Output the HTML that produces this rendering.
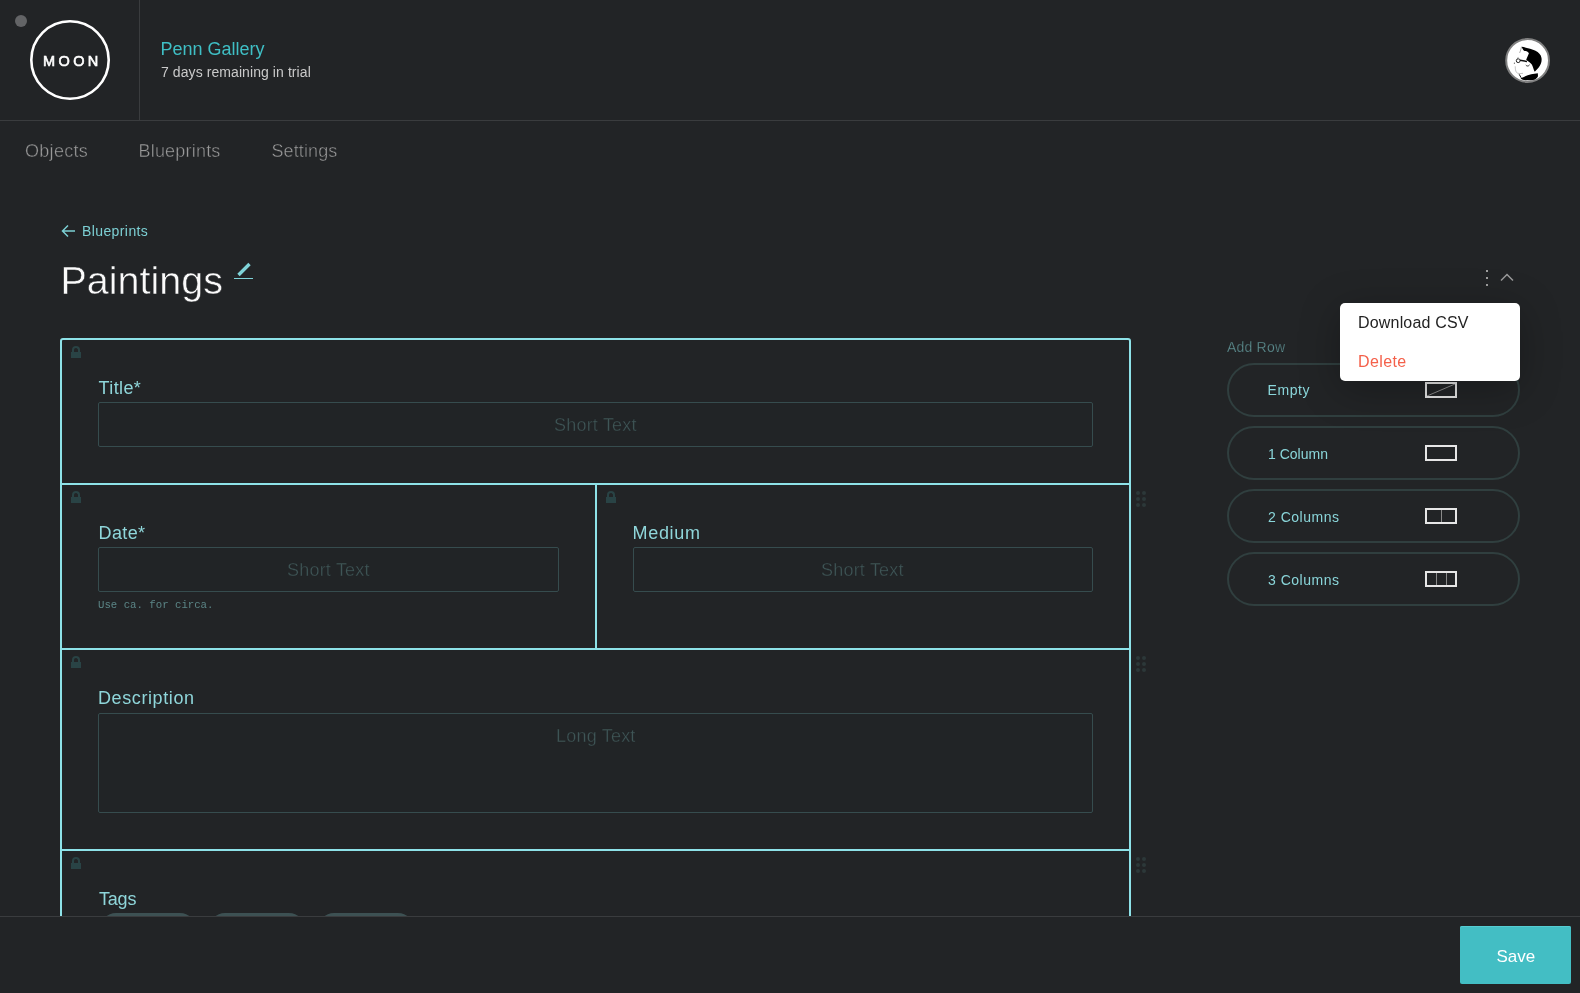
<!DOCTYPE html>
<html>
<head>
<meta charset="utf-8">
<style>
html,body{margin:0;padding:0;}
body{width:1580px;height:993px;overflow:hidden;background:#222426;font-family:"Liberation Sans",sans-serif;position:relative;-webkit-font-smoothing:antialiased;}
.a{position:absolute;line-height:1;white-space:pre;}
.hl{position:absolute;height:1px;background:#3a3c3e;}
.vl{position:absolute;width:1px;background:#3a3c3e;}
.cb{position:absolute;background:#8ee2e8;}
.lock{position:absolute;width:10px;height:13px;}
.lock:before{content:"";position:absolute;left:1px;top:0;width:4px;height:6px;border:2px solid #294345;border-bottom:none;border-radius:4px 4px 0 0;}
.lock:after{content:"";position:absolute;left:0;top:6px;width:10px;height:6px;background:#294345;}
.lbl{font-size:18px;color:#8fd6da;}
.inp{position:absolute;border:1px solid #364c4e;border-radius:2px;background:#212426;box-sizing:border-box;}
.ph{font-size:18px;color:#3f5657;letter-spacing:0.2px;-webkit-text-stroke:0.35px #212426;}
.drag{position:absolute;width:10px;height:16px;}
.drag i{position:absolute;width:4px;height:4px;border-radius:50%;background:#2c3839;}
.pill{position:absolute;left:1227px;width:293px;height:54px;box-sizing:border-box;border:2px solid #303f3f;border-radius:27px;}
.pt{font-size:14px;color:#8ad6da;}
.ico{position:absolute;left:1425px;width:32px;height:16px;box-sizing:border-box;border:2px solid #e6e6e6;}
.ico i{position:absolute;top:0;width:1px;height:12px;background:#8a8a8a;}
.tag{position:absolute;top:913px;width:96px;height:32px;border-radius:16px;background:#3d5153;}
</style>
</head>
<body>
<div id="w" style="position:absolute;left:0;top:0;width:1580px;height:993px;will-change:transform;">
<!-- header -->
<div class="a" style="left:15px;top:15px;width:12px;height:12px;border-radius:50%;background:#636466;"></div>
<svg class="a" style="left:30px;top:20px;" width="80" height="80" viewBox="0 0 80 80"><circle cx="40" cy="40" r="38.7" fill="none" stroke="#fff" stroke-width="2.6"/></svg>
<div class="a" style="left:43px;top:54px;font-size:14.5px;font-weight:400;color:#fff;letter-spacing:3.4px;-webkit-text-stroke:0.6px #fff;">MOON</div>
<div class="vl" style="left:139px;top:0;height:120px;"></div>
<div class="hl" style="left:0;top:120px;width:1580px;"></div>
<div class="a" style="left:160.5px;top:40px;font-size:18px;color:#3fbfc5;">Penn Gallery</div>
<div class="a" style="left:161px;top:65px;font-size:14px;color:#cacaca;letter-spacing:0.08px;">7 days remaining in trial</div>
<!-- avatar -->
<svg class="a" style="left:1505px;top:38px;" width="45" height="45" viewBox="0 0 45 45">
  <circle cx="22.6" cy="22.5" r="21.4" fill="#fff" stroke="#808080" stroke-width="2"/>
  <path d="M16.6 8.8 C20 9.3 27 11 30.5 12.8 C33.5 14.5 36 16.5 36.5 20 C37 23.5 36 26.5 33.5 29.8 L30 33.5 L29.5 33.5 C28.5 31 27.8 28.5 26.8 26.5 C25.5 24.8 23 23.3 21.2 21.8 C21.8 20 22.8 18 23.9 15.2 C23 13.5 21.5 13 19.5 13 C18.5 12.5 17.8 11.5 16.6 8.8 Z" fill="#000"/>
  <path d="M15.6 40.3 C19 38.8 23 37 26.2 36.3 L32.8 35.2 L33 38.3 C32 40 31 41 30 41.4 C27 42.2 23 42.5 20.5 42.3 C18.5 42 17 41.8 15.6 40.3 Z" fill="#000"/>
  <circle cx="13.2" cy="22.7" r="1.9" fill="none" stroke="#222" stroke-width="1"/>
  <path d="M15 22.3 L22 23.4" stroke="#111" stroke-width="1.5"/>
  <path d="M12.3 20.3 L13.3 19.6" stroke="#333" stroke-width="0.8"/>
  <path d="M20.8 27 C21.8 28.4 23.5 28.4 24.6 26.8" fill="none" stroke="#222" stroke-width="0.9"/>
  <path d="M14.2 36.3 L16.2 39.8" stroke="#111" stroke-width="1"/>
  <path d="M16.6 8.8 C16 11 15.5 13 14.6 15" fill="none" stroke="#777" stroke-width="0.6"/>
  <path d="M10.2 28.3 C10.3 31 10.6 33 11.4 34.3 C12.5 35.6 15 35.8 18 35.3" fill="none" stroke="#aaa" stroke-width="0.7"/>
  <circle cx="9.4" cy="25.2" r="0.6" fill="#555"/>
</svg>

<!-- nav -->
<div class="a" style="left:25px;top:142px;font-size:18px;color:#9a9a9a;-webkit-text-stroke:0.4px #222426;letter-spacing:0.3px;">Objects</div>
<div class="a" style="left:138.5px;top:142px;font-size:18px;color:#9a9a9a;-webkit-text-stroke:0.4px #222426;letter-spacing:0.2px;">Blueprints</div>
<div class="a" style="left:271.5px;top:142px;font-size:18px;color:#9a9a9a;-webkit-text-stroke:0.4px #222426;letter-spacing:0.1px;">Settings</div>

<!-- breadcrumb & title -->
<svg class="a" style="left:61px;top:224px;" width="15" height="14" viewBox="0 0 15 14">
  <path d="M7 1.5 L1.5 7 L7 12.5 M1.5 7 L14 7" fill="none" stroke="#7ccfd3" stroke-width="1.5"/>
</svg>
<div class="a" style="left:82px;top:224px;font-size:14px;color:#7ccfd3;letter-spacing:0.4px;">Blueprints</div>
<div class="a" style="left:60.5px;top:260.8px;font-size:39.5px;color:#fafafa;-webkit-text-stroke:0.5px #222426;">Paintings</div>
<svg class="a" style="left:233px;top:262px;" width="22" height="18" viewBox="0 0 22 18">
  <path d="M5.5 13 L16.5 2" stroke="#7fd3d8" stroke-width="3.4"/>
  <path d="M1 16.5 L20 16.5" stroke="#7fd3d8" stroke-width="1"/>
</svg>

<!-- kebab / chevron -->
<div class="a" style="left:1486px;top:270px;width:2px;height:2px;background:#9e9e9e;"></div>
<div class="a" style="left:1486px;top:277px;width:2px;height:2px;background:#9e9e9e;"></div>
<div class="a" style="left:1486px;top:284px;width:2px;height:2px;background:#9e9e9e;"></div>
<svg class="a" style="left:1499px;top:272px;" width="16" height="11" viewBox="0 0 16 11">
  <path d="M2 8.5 L8 2.5 L14 8.5" fill="none" stroke="#9a9a9a" stroke-width="1.5"/>
</svg>

<!-- canvas -->
<div class="a" style="left:60px;top:338px;width:1071px;height:700px;box-sizing:border-box;border:2px solid #8ee2e8;border-radius:3px;"></div>
<div class="cb" style="left:60px;top:483px;width:1071px;height:2px;"></div>
<div class="cb" style="left:60px;top:648px;width:1071px;height:2px;"></div>
<div class="cb" style="left:60px;top:849px;width:1071px;height:2px;"></div>
<div class="cb" style="left:595px;top:483px;width:2px;height:167px;"></div>

<!-- row 1 -->
<div class="lock" style="left:71px;top:346px;"></div>
<div class="a lbl" style="left:98.5px;top:379px;letter-spacing:0.4px;">Title*</div>
<div class="inp" style="left:98px;top:402px;width:995px;height:45px;"></div>
<div class="a ph" style="left:554px;top:416px;">Short Text</div>

<!-- row 2 -->
<div class="lock" style="left:71px;top:491px;"></div>
<div class="lock" style="left:606px;top:491px;"></div>
<div class="a lbl" style="left:98.5px;top:524px;letter-spacing:0.4px;">Date*</div>
<div class="inp" style="left:98px;top:547px;width:461px;height:45px;"></div>
<div class="a ph" style="left:287px;top:561px;">Short Text</div>
<div class="a" style="left:98px;top:600px;font-family:'Liberation Mono',monospace;font-size:10.7px;color:#5b8586;">Use ca. for circa.</div>
<div class="a lbl" style="left:632.5px;top:524px;letter-spacing:0.7px;">Medium</div>
<div class="inp" style="left:633px;top:547px;width:460px;height:45px;"></div>
<div class="a ph" style="left:821px;top:561px;">Short Text</div>

<!-- row 3 -->
<div class="lock" style="left:71px;top:656px;"></div>
<div class="a lbl" style="left:98px;top:689px;letter-spacing:0.6px;">Description</div>
<div class="inp" style="left:98px;top:713px;width:995px;height:100px;"></div>
<div class="a ph" style="left:556px;top:727px;">Long Text</div>

<!-- row 4 -->
<div class="lock" style="left:71px;top:857px;"></div>
<div class="a lbl" style="left:99px;top:890px;letter-spacing:-0.2px;">Tags</div>
<div class="tag" style="left:100px;"></div>
<div class="tag" style="left:209px;"></div>
<div class="tag" style="left:318px;"></div>

<!-- drag handles -->
<div class="drag" style="left:1136px;top:491px;"><i style="left:0;top:0"></i><i style="left:6px;top:0"></i><i style="left:0;top:6px"></i><i style="left:6px;top:6px"></i><i style="left:0;top:12px"></i><i style="left:6px;top:12px"></i></div>
<div class="drag" style="left:1136px;top:656px;"><i style="left:0;top:0"></i><i style="left:6px;top:0"></i><i style="left:0;top:6px"></i><i style="left:6px;top:6px"></i><i style="left:0;top:12px"></i><i style="left:6px;top:12px"></i></div>
<div class="drag" style="left:1136px;top:857px;"><i style="left:0;top:0"></i><i style="left:6px;top:0"></i><i style="left:0;top:6px"></i><i style="left:6px;top:6px"></i><i style="left:0;top:12px"></i><i style="left:6px;top:12px"></i></div>

<!-- add row panel -->
<div class="a" style="left:1227px;top:340px;font-size:14px;color:#5d8e90;letter-spacing:0.2px;-webkit-text-stroke:0.25px #222426;">Add Row</div>
<div class="pill" style="top:363px;"></div>
<div class="a pt" style="left:1267.5px;top:383px;letter-spacing:0.6px;">Empty</div>
<div class="ico" style="top:382px;"><svg style="position:absolute;left:0;top:0" width="28" height="12"><path d="M0 12 L28 0" stroke="#8a8a8a" stroke-width="1"/></svg></div>
<div class="pill" style="top:426px;"></div>
<div class="a pt" style="left:1268px;top:447px;">1 Column</div>
<div class="ico" style="top:445px;"></div>
<div class="pill" style="top:489px;"></div>
<div class="a pt" style="left:1268px;top:510px;letter-spacing:0.5px;">2 Columns</div>
<div class="ico" style="top:508px;"><i style="left:14px"></i></div>
<div class="pill" style="top:552px;"></div>
<div class="a pt" style="left:1268px;top:573px;letter-spacing:0.5px;">3 Columns</div>
<div class="ico" style="top:571px;"><i style="left:9px"></i><i style="left:19px"></i></div>

<!-- dropdown -->
<div class="a" style="left:1340px;top:303px;width:180px;height:78px;background:#fff;border-radius:5px;box-shadow:0 8px 40px rgba(0,0,0,0.28);"></div>
<div class="a" style="left:1358px;top:315px;font-size:16px;color:#232323;letter-spacing:0.18px;">Download CSV</div>
<div class="a" style="left:1358px;top:354px;font-size:16px;color:#f4604a;letter-spacing:0.4px;">Delete</div>

<!-- footer -->
<div class="a" style="left:0;top:916px;width:1580px;height:77px;background:#222426;border-top:1px solid #3a3c3e;"></div>
<div class="a" style="left:1460px;top:926px;width:111px;height:58px;background:#43bec4;border-radius:2px;box-shadow:inset 0 1px 0 #56ccd2;"></div>
<div class="a" style="left:1496.5px;top:948px;font-size:17px;color:#fff;">Save</div>
</div>
</body>
</html>
